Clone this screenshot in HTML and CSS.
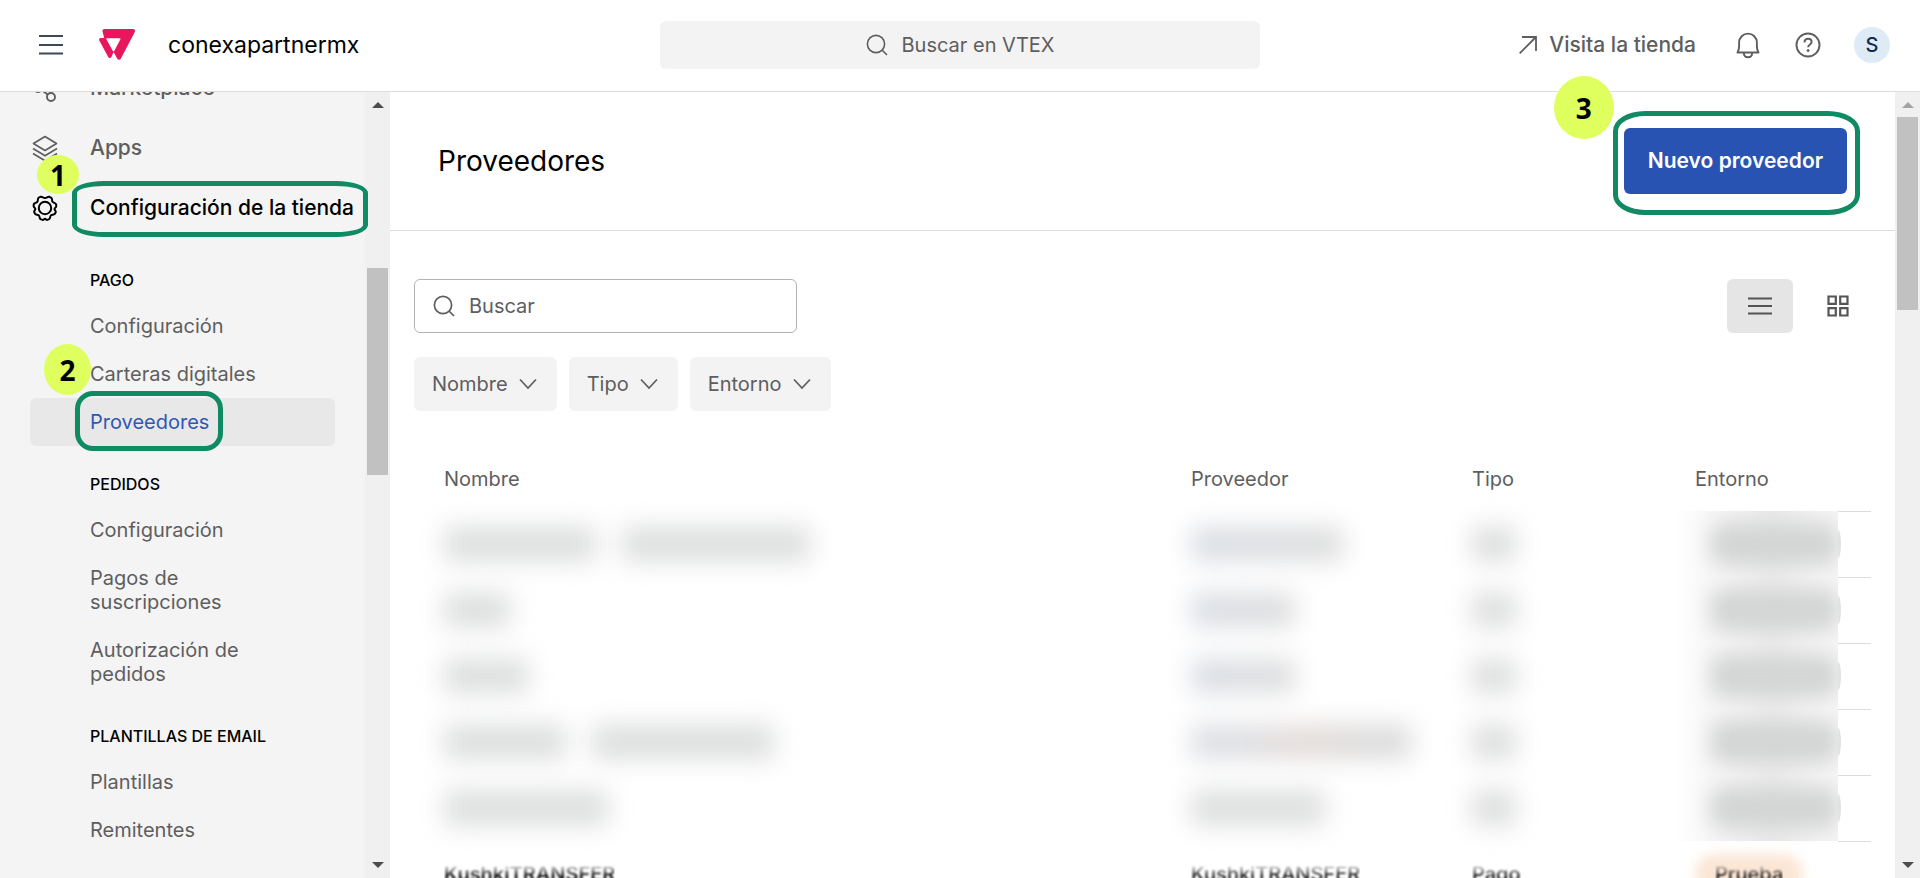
FILE: index.html
```html
<!DOCTYPE html>
<html lang="es">
<head>
<meta charset="utf-8">
<title>Proveedores</title>
<link rel="stylesheet" href="styles.css">
</head>
<body>
<div class="app">
  <header class="topbar">
    <div class="topbar-left">
      <button class="icon-button" aria-label="Menú">
        <svg width="24" height="20" viewBox="0 0 24 20" fill="none" stroke="#3f4858" stroke-width="1.8"><path d="M0 1h24M0 10h24M0 18.500h24"/></svg>
      </button>
      <svg class="logo" width="36" height="31" viewBox="0 0 36 31" role="img" aria-label="VTEX"><path fill="#e8175d" fill-rule="evenodd" d="M5.500 0H34a2 2 0 0 1 1.800 2.900L21.800 29.700a2 2 0 0 1-3.500 0L14.600 23l-2.200 5.100a1.800 1.800 0 0 1-3.200 0L.300 11.500A1.700 1.700 0 0 1 1.800 9H5.200L3.700 3.200A2.100 2.100 0 0 1 5.500 0ZM8.200 9.300h12.600a.7.7 0 0 1 .6 1l-6 11.500a1 1 0 0 1-1.700 0L7.400 10.300a.7.7 0 0 1 .8-1Z"/></svg>
      <span class="account">conexapartnermx</span>
    </div>
    <button class="global-search">
      <svg width="22" height="22" viewBox="0 0 22 22" fill="none" stroke="#5e5e5e" stroke-width="1.600"><circle cx="10" cy="10" r="8.600"/><path d="M16 16l5 5"/></svg>
      Buscar en VTEX
    </button>
    <div class="topbar-right">
      <a class="store-link" href="#">
        <svg width="18" height="18" viewBox="0 0 18 18" fill="none" stroke="#5e5e5e" stroke-width="1.800"><path d="M.7 17.300L17 1M3 1h14v14"/></svg>
        Visita la tienda
      </a>
      <button class="icon-button" aria-label="Notificaciones">
        <svg width="28" height="28" viewBox="0 0 28 28" fill="none" stroke="#5e5e5e" stroke-width="1.900" stroke-linejoin="round"><path d="M3.500 21.500c1-1.600 1.600-3.600 1.600-6.500v-3.500a8.900 8.900 0 0 1 17.800 0V15c0 2.900.6 4.900 1.600 6.500ZM9.800 21.500c0 3.200 1.800 4.800 4.200 4.800s4.200-1.600 4.200-4.800"/></svg>
      </button>
      <button class="icon-button" aria-label="Ayuda">
        <svg width="28" height="28" viewBox="0 0 28 28" fill="none" stroke="#5e5e5e" stroke-width="1.900"><circle cx="14" cy="14" r="11.500"/><path d="M10.500 11.400c0-2.300 1.500-3.700 3.600-3.700s3.500 1.300 3.500 3.200c0 2.600-3.500 2.500-3.500 5.400"/><circle cx="14.100" cy="19.500" r="1" fill="#5e5e5e" stroke-width="1"/></svg>
      </button>
      <button class="avatar">S</button>
    </div>
  </header>

  <div class="workspace">
    <aside class="sidebar">
      <nav class="nav">
        <a class="nav-item" href="#">
          <svg width="28" height="28" viewBox="0 0 28 28" fill="none" stroke="#5e5e5e" stroke-width="1.900"><circle cx="7" cy="14" r="4"/><circle cx="20" cy="23" r="4"/><circle cx="20" cy="5" r="4"/><path d="M10.500 16l6.200 4.500M10.500 12l6.200-4.500"/></svg>
          <span>Marketplace</span>
        </a>
        <a class="nav-item" href="#">
          <svg width="28" height="28" viewBox="0 0 28 28" fill="none" stroke="#5e5e5e" stroke-width="1.700" stroke-linejoin="round"><path d="M14 2.500l11.500 7L14 16.500l-11.500-7ZM2 14.500l12 7.300 12-7.300M2 19.500l12 7.300 12-7.300"/></svg>
          <span>Apps</span>
        </a>
        <a class="nav-item nav-item-open" href="#">
          <svg width="28" height="28" viewBox="0 0 28 28" fill="none" stroke="#000" stroke-width="2" stroke-linejoin="round"><path d="M9.500 2.800c1.600-.6 2.700 1.200 4.500 1.200s2.900-1.800 4.500-1.200l1.800 1c1.400 1.100.3 2.700 1.200 4s3.200 1 3.700 2.700v2c-.1 1.300-1.700 1.300-1.700 2.500s1.300 1.700 1.300 3l-.9 1.800c-1.300 1.400-2.900.5-4 1.600s-.4 2.900-1.800 3.700l-1.800.8c-1.200.3-1.500-1.200-2.300-1.200s-1.300 1.500-2.500 1.200l-2-.8c-1.400-.9-.6-2.600-1.600-3.700s-3-.3-3.900-1.700l-.8-1.700c-.4-1.300 1.100-1.800 1.100-3s-1.500-1.500-1.600-2.700v-2c.6-1.600 2.600-1.200 3.600-2.500s0-3 1.300-4.100Z"/><circle cx="14" cy="14" r="6.200"/></svg>
          <span class="marked">Configuración de la tienda<i class="ring ring-store"></i></span>
          <b class="step step-1">1</b>
        </a>
        <section class="nav-group">
          <h2>Pago</h2>
          <a href="#">Configuración</a>
          <a href="#">Carteras digitales</a>
          <a class="current" href="#"><span class="marked">Proveedores<i class="ring ring-providers"></i></span><b class="step step-2">2</b></a>
        </section>
        <section class="nav-group">
          <h2>Pedidos</h2>
          <a href="#">Configuración</a>
          <a href="#">Pagos de suscripciones</a>
          <a href="#">Autorización de pedidos</a>
        </section>
        <section class="nav-group">
          <h2>Plantillas de email</h2>
          <a href="#">Plantillas</a>
          <a href="#">Remitentes</a>
        </section>
      </nav>
      <div class="scrollbar" aria-hidden="true">
        <i class="arrow arrow-up"></i>
        <div class="track"><i class="thumb"></i></div>
        <i class="arrow arrow-down"></i>
      </div>
    </aside>

    <main class="main">
      <div class="page">
        <div class="page-header">
          <h1>Proveedores</h1>
          <div class="marked">
            <button class="primary">Nuevo proveedor</button>
            <i class="ring ring-new"></i>
            <b class="step step-3">3</b>
          </div>
        </div>
        <div class="content">
          <div class="toolbar">
            <label class="search">
              <svg width="22" height="22" viewBox="0 0 22 22" fill="none" stroke="#5e5e5e" stroke-width="1.700"><circle cx="10" cy="10" r="8.600"/><path d="M16 16l5 5"/></svg>
              <input type="text" placeholder="Buscar" aria-label="Buscar">
            </label>
            <div class="views">
              <button class="view active" aria-label="Lista"><svg width="24" height="20" viewBox="0 0 24 20" fill="none" stroke="#555" stroke-width="2"><path d="M0 2.500h24M0 10h24M0 17.500h24"/></svg></button>
              <button class="view" aria-label="Cuadrícula"><svg width="24" height="24" viewBox="0 0 24 24" fill="none" stroke="#555" stroke-width="2.200"><path d="M2.500 2.500h7.300v7.300H2.500ZM14.200 2.500h7.300v7.300h-7.300ZM2.500 14.200h7.300v7.300H2.500ZM14.200 14.200h7.300v7.300h-7.300Z"/></svg></button>
            </div>
          </div>
          <div class="filters">
            <button class="filter">Nombre <svg width="18" height="12" viewBox="0 0 18 12" fill="none" stroke="#5e5e5e" stroke-width="1.700"><path d="M1 1.500l8 8.500 8-8.500"/></svg></button>
            <button class="filter">Tipo <svg width="18" height="12" viewBox="0 0 18 12" fill="none" stroke="#5e5e5e" stroke-width="1.700"><path d="M1 1.500l8 8.500 8-8.500"/></svg></button>
            <button class="filter">Entorno <svg width="18" height="12" viewBox="0 0 18 12" fill="none" stroke="#5e5e5e" stroke-width="1.700"><path d="M1 1.500l8 8.500 8-8.500"/></svg></button>
          </div>
          <table class="providers">
            <thead>
              <tr><th>Nombre</th><th class="col-provider">Proveedor</th><th class="col-type">Tipo</th><th class="col-env">Entorno</th></tr>
            </thead>
            <tbody>
              <tr><td><i class="smear" style="width:152px"></i><i class="smear" style="width:188px"></i></td><td><i class="smear cool" style="width:152px"></i></td><td><i class="smear" style="width:44px"></i></td><td class="env"><div class="env-cell"><div class="veil"><i class="pill"></i></div><i class="pill-end"></i></div></td></tr>
              <tr><td><i class="smear" style="width:66px"></i></td><td><i class="smear cool" style="width:104px"></i></td><td><i class="smear" style="width:44px"></i></td><td class="env"><div class="env-cell"><div class="veil"><i class="pill"></i></div><i class="pill-end"></i></div></td></tr>
              <tr><td><i class="smear" style="width:84px"></i></td><td><i class="smear cool" style="width:104px"></i></td><td><i class="smear" style="width:44px"></i></td><td class="env"><div class="env-cell"><div class="veil"><i class="pill"></i></div><i class="pill-end"></i></div></td></tr>
              <tr><td><i class="smear" style="width:122px"></i><i class="smear" style="width:182px"></i></td><td><i class="smear warm" style="width:220px"></i></td><td><i class="smear" style="width:44px"></i></td><td class="env"><div class="env-cell"><div class="veil"><i class="pill"></i></div><i class="pill-end"></i></div></td></tr>
              <tr><td><i class="smear" style="width:164px"></i></td><td><i class="smear" style="width:134px"></i></td><td><i class="smear" style="width:44px"></i></td><td class="env"><div class="env-cell"><div class="veil"><i class="pill"></i></div><i class="pill-end"></i></div></td></tr>
              <tr><td><span class="soft strong">KushkiTRANSFER</span></td><td><span class="soft">KushkiTRANSFER</span></td><td><span class="soft">Pago</span></td><td class="env"><span class="tag"><span class="soft">Prueba</span></span></td></tr>
            </tbody>
          </table>
        </div>
      </div>
      <div class="scrollbar scrollbar-main" aria-hidden="true">
        <i class="arrow arrow-up muted"></i>
        <div class="track"><i class="thumb"></i></div>
        <i class="arrow arrow-down"></i>
      </div>
    </main>
  </div>
</div>
</body>
</html>
```
FILE: styles.css
```css
* { box-sizing: border-box; }
body {
  margin: 0;
  font-family: Inter, "Liberation Sans", sans-serif;
  font-size: 20px;
  line-height: 24px;
  color: #5e5e5e;
  background: #fff;
}
button, input { font: inherit; color: inherit; border: 0; background: none; padding: 0; }
a { color: inherit; text-decoration: none; }
svg { display: block; flex: none; }
i { font-style: normal; }
h1, h2 { margin: 0; font-weight: 400; color: #000; }

.app { display: flex; flex-direction: column; height: 100vh; overflow: hidden; }

/* Top bar */
.topbar {
  display: grid;
  grid-template-columns: 1fr 600px 1fr;
  align-items: center;
  height: 92px;
  flex: none;
  padding: 0 30px 2px;
  border-bottom: 1px solid #dcdcdc;
}
.topbar-left, .topbar-right { display: flex; align-items: center; }
.topbar-left { padding-left: 9px; }
.topbar-right { justify-content: flex-end; gap: 32px; }
.logo { margin: 0 33px 0 36px; }
.account { font-size: 23px; color: #000; }
.global-search {
  display: flex;
  align-items: center;
  justify-content: center;
  gap: 14px;
  height: 48px;
  border-radius: 6px;
  background: #f3f3f3;
}
.store-link {
  display: flex;
  align-items: center;
  gap: 12px;
  margin-right: 6px;
  font-size: 21px;
  font-weight: 500;
}
.avatar {
  width: 36px;
  height: 36px;
  border-radius: 50%;
  background: #deebf7;
  color: #0c2d4f;
  font-weight: 500;
}

.workspace { display: flex; flex: 1; min-height: 0; }

/* Side navigation, scrolled part of the way down */
.sidebar { display: flex; width: 390px; flex: none; overflow: hidden; background: #f4f4f4; }
.nav { flex: 1; min-width: 0; margin-top: -34px; padding: 0 30px; }
.nav-item {
  position: relative;
  display: flex;
  align-items: center;
  gap: 31px;
  height: 60px;
  padding-left: 1px;
  font-size: 21px;
  font-weight: 500;
  white-space: nowrap;
}
.nav-item-open { color: #000; margin-bottom: 4px; }
.nav-group h2 {
  padding: 28px 0 12px 60px;
  font-size: 16px;
  line-height: 20px;
  font-weight: 500;
  text-transform: uppercase;
}
.nav-group a { display: block; position: relative; padding: 12px 60px; border-radius: 6px; }
.nav-group .current { background: #e8e8e8; color: #3157b5; }

/* Scrollbars */
.scrollbar {
  display: flex;
  flex-direction: column;
  align-items: center;
  width: 25px;
  flex: none;
  padding: 10px 0;
  background: #f0f0f0;
}
.arrow { border: 6px solid transparent; }
.arrow-up { border-top: 0; border-bottom-color: #4d4d4d; }
.arrow-down { border-bottom: 0; border-top-color: #4d4d4d; }
.arrow-up.muted { border-bottom-color: #a3a3a3; }
.track { flex: 1; display: grid; grid-template-rows: 151px 207px; margin-top: 9px; }
.scrollbar-main .track { grid-template-rows: 0 193px; }
.thumb { grid-row: 2; width: 21px; background: #c1c1c1; }

/* Page */
.main { display: flex; flex: 1; min-width: 0; }
.page { display: flex; flex-direction: column; flex: 1; min-width: 0; }
.page-header {
  display: flex;
  align-items: center;
  justify-content: space-between;
  flex: none;
  height: 139px;
  padding: 0 48px;
  border-bottom: 1px solid #dcdcdc;
}
h1 { font-size: 28px; line-height: 36px; }
.primary {
  display: block;
  height: 66px;
  padding: 0 24px;
  border-radius: 6px;
  background: #2953b2;
  color: #fff;
  font-size: 21px;
  font-weight: 600;
}
.content { flex: 1; min-height: 0; overflow: hidden; padding: 48px 24px 0; }
.toolbar { display: flex; justify-content: space-between; }
.search {
  display: flex;
  align-items: center;
  gap: 14px;
  width: 383px;
  height: 54px;
  padding: 0 18px;
  border: 1px solid #b3b3b3;
  border-radius: 6px;
}
.search input { flex: 1; min-width: 0; outline: 0; }
.search input::placeholder { color: #5e5e5e; opacity: 1; }
.views { display: flex; gap: 12px; }
.view { display: grid; place-items: center; width: 66px; height: 54px; border-radius: 6px; }
.view.active { background: #e5e5e5; }
.filters { display: flex; gap: 12px; margin-top: 24px; }
.filter {
  display: flex;
  align-items: center;
  gap: 11px;
  height: 54px;
  padding: 0 20px 0 18px;
  border-radius: 6px;
  background: #f3f3f3;
}

/* Providers table */
.providers { width: 100%; margin-top: 36px; border-collapse: collapse; table-layout: fixed; }
.providers th { height: 64px; padding: 0 0 0 30px; text-align: left; font-weight: 400; }
.providers td { height: 66px; padding: 0 0 0 30px; color: #111; }
.col-provider { width: 281px; }
.col-type { width: 223px; }
.providers .col-env { width: 206px; }
.smear {
  display: inline-block;
  height: 34px;
  margin-right: 26px;
  vertical-align: middle;
  background: #dcdddd;
  filter: blur(13px);
}
.smear.cool { background: linear-gradient(90deg, #d9dde4, #dddddd); }
.smear.warm { background: linear-gradient(90deg, #dcdee3 20%, #e3dbd8 50%, #dbdbdb 80%); }
.env { background: linear-gradient(#dcdcdc, #dcdcdc) right top / 33px 1px no-repeat; }
.env-cell { display: flex; align-items: center; padding-right: 30px; margin-left: -20px; }
.veil {
  flex: 1;
  height: 66px;
  overflow: hidden;
  padding: 13px 0 0 36px;
  background: linear-gradient(90deg, #fff, #f0f0f0 40%, #eaeaea 60%, #f6f6f6);
}
.pill {
  display: block;
  width: 100%;
  height: 40px;
  border-radius: 10px;
  background: #d3d4d4;
  filter: blur(10px);
}
.pill-end {
  width: 3px;
  height: 28px;
  border-radius: 0 3px 3px 0 / 0 14px 14px 0;
  background: #e2e2e2;
}
.soft {
  position: relative;
  font-weight: 500;
  filter: blur(1px);
  mask-image: linear-gradient(transparent 2px, #000 14px);
}
.soft.strong { font-weight: 600; }
.tag { position: relative; display: inline-block; padding: 8px 20px; }
.tag::before {
  content: "";
  position: absolute;
  inset: 0;
  border-radius: 20px;
  background: #fbe6d5;
  filter: blur(6px);
}

/* Step annotations */
.marked { position: relative; }
.ring {
  position: absolute;
  z-index: 2;
  border: 5px solid #0f8a63;
  border-radius: 32px / 18px;
  pointer-events: none;
}
.ring-store { inset: -15px -14px -17px -18px; border-radius: 32px / 12px; }
.ring-providers { inset: -19px -14px -17px -15px; border-radius: 18px; }
.ring-new { inset: -17px -13px -21px -11px; border-radius: 32px / 20px; }
.step {
  position: absolute;
  z-index: 3;
  display: grid;
  place-items: center;
  border-radius: 50%;
  background: #dfff5e;
  color: #000;
  font-family: "Open Sans", sans-serif;
  font-size: 28px;
  font-weight: 700;
}
.step-1 { left: 7px; top: -23px; width: 42px; height: 39px; }
.step-2 { left: 14px; top: -54px; width: 47px; height: 51px; }
.step-3 { right: 100%; top: -52px; width: 60px; height: 63px; margin-right: 10px; }
```
